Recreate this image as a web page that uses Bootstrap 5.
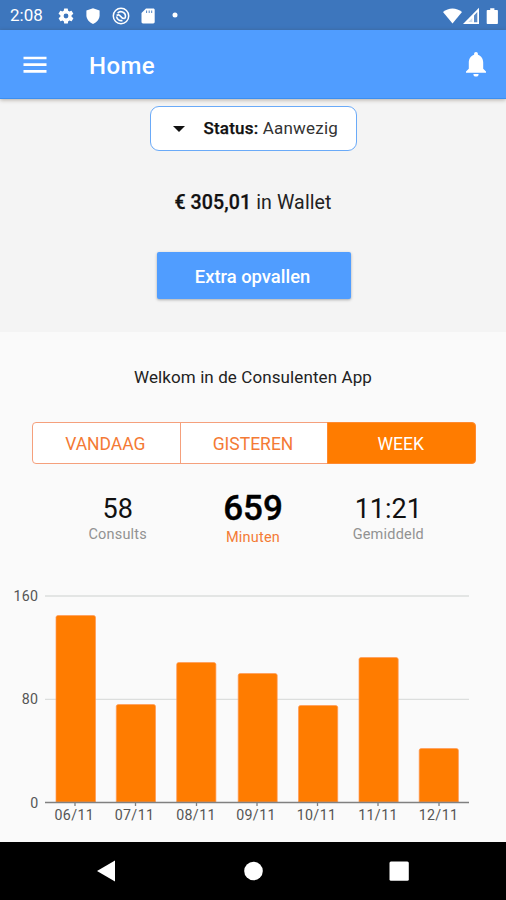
<!DOCTYPE html>
<html lang="nl">
<head>
<meta charset="utf-8">
<meta name="viewport" content="width=device-width, initial-scale=1">
<title>Home</title>
<link href="https://cdn.jsdelivr.net/npm/bootstrap@5.3.0/dist/css/bootstrap.min.css" rel="stylesheet">
<style>
  body { font-family: Roboto, "Liberation Sans", sans-serif; background: #fafafa; color: #222; height: 900px; overflow: hidden; }
  svg { display: block; flex: none; }
  .status-bar { height: 30px; background: #3d76bd; padding: 2px 7px 0 10px; font-size: 17px; }
  .status-icons { margin-left: 14px; gap: 9.4px; }
  .app-bar { height: 69px; background: #509dff; border-bottom: 1px solid #3c8ff0; box-shadow: 0 1px 4px rgba(60,40,20,.35); padding: 0 17px 0 21px; z-index: 1; }
  .app-title { font-size: 24px; font-weight: 500; margin-left: 40px; padding-top: 3px; letter-spacing: .4px; line-height: 1; }
  .hero { height: 233px; background: #f4f4f4; padding-top: 7px; }
  .status-select, .status-select:hover { width: 207px; height: 45px; border: 1px solid #6aaaf8; border-radius: 9px; background: #fff; color: #333; font-size: 17px; padding: 1px 18px 0 22px; letter-spacing: .2px; margin-left: 1px; }
  .status-select b, .wallet b { font-weight: 500; color: #111; -webkit-text-stroke: .25px #111; }
  .wallet { font-size: 19.6px; line-height: 24px; margin-top: 40px; letter-spacing: .1px; }
  .boost, .boost:hover { width: 194px; height: 47px; margin: 37px 0 0 1px; border: 0; border-radius: 2px; background: #509dff; color: #fff; font-size: 18.4px; font-weight: 500; box-shadow: 0 1px 3px rgba(0,0,0,.3); }
  .boost span { padding: 2px 2px 0 0; display: block; }
  .welcome { font-size: 17px; line-height: 20px; padding-top: 35px; letter-spacing: .1px; }
  .periods { margin: 35px 30px 0 32px; height: 42px; }
  .periods .btn { flex: 1 1 0; border: 1px solid #f5a07c; background: #fff; color: #f47a35; font-size: 17.5px; padding: 2px 2px 0 0; border-radius: 4px; }
  .periods .btn.active { background: #ff7c00; border-color: #ff8a30; color: #fff; }
  .stats { margin: 23px 50px 0; height: 61px; }
  .stat-number { font-size: 27px; line-height: 32px; color: #111; margin-top: 6px; }
  .stat-label { font-size: 14.5px; line-height: 18px; color: #929292; letter-spacing: .2px; margin-top: 1px; }
  .stat-main .stat-number { font-size: 35px; line-height: 36px; font-weight: 500; color: #000; margin-top: 4px; -webkit-text-stroke: .4px #000; }
  .stat-main .stat-label { color: #f47a35; margin-top: 2px; }
  .chart text { font-size: 14.2px; fill: #555; letter-spacing: .4px; }
  .nav-keys { height: 58px; background: #000; }
</style>
</head>
<body class="d-flex flex-column">
<div class="status-bar d-flex align-items-center text-white flex-shrink-0">
  <span>2:08</span>
  <div class="status-icons d-flex align-items-center">
    <svg width="18" height="18" viewBox="0 0 24 24" fill="#fff"><path d="M19.4 13a7.500 7.500 0 0 0 0-2l2.100-1.600a.5.5 0 0 0 .1-.6l-2-3.500a.5.5 0 0 0-.6-.2l-2.500 1a7.300 7.300 0 0 0-1.700-1l-.4-2.700a.5.5 0 0 0-.5-.4h-4a.5.5 0 0 0-.5.4L9 5.100a7.700 7.700 0 0 0-1.700 1l-2.500-1a.5.5 0 0 0-.6.2l-2 3.500a.5.5 0 0 0 .1.600L4.500 11a7.900 7.900 0 0 0 0 2l-2.100 1.600a.5.5 0 0 0-.1.600l2 3.500c.1.200.4.300.6.200l2.500-1c.5.400 1.100.7 1.700 1l.4 2.700c0 .2.200.4.500.4h4c.2 0 .5-.2.500-.4l.4-2.700c.6-.3 1.200-.6 1.700-1l2.500 1c.2.100.5 0 .6-.2l2-3.500a.5.500 0 0 0-.1-.6zM12 15.200a3.200 3.200 0 1 1 0-6.400 3.200 3.200 0 0 1 0 6.400z"/></svg>
    <svg width="18" height="18" viewBox="0 0 18 18" fill="#fff"><path d="M9 1.200L2.400 3.500v4.700c0 4 2.800 7.200 6.600 8.700 3.800-1.500 6.600-4.700 6.600-8.700V3.500z"/></svg>
    <svg width="18" height="18" viewBox="0 0 18 18" fill="none" stroke="#fff"><circle cx="9" cy="9" r="7.700" stroke-width="1.500"/><path d="M5.600 6.200A4.500 4.500 0 0 1 13.500 9c0 1-.3 1.800-.8 2.500M4.600 8.500c1.400-.9 2.900-.6 3.900.7 1 1.400 2.200 2.600 4.200 2.300M4.600 9.500A4.500 4.500 0 0 0 10.500 13.400" stroke-width="1.600"/></svg>
    <svg width="18" height="18" viewBox="0 0 18 18"><path d="M7 1.500h7.200c.9 0 1.500.6 1.500 1.400v12.200c0 .8-.6 1.400-1.500 1.400H4c-.9 0-1.500-.6-1.500-1.400V6z" fill="#fff"/><path d="M7.600 3.500v2.500M10.200 3.500v2.500M12.700 3.500v2.500" stroke="#3d76bd" stroke-width=".9"/></svg>
    <svg width="18" height="18" viewBox="0 0 18 18"><circle cx="9" cy="8" r="2.500" fill="#fff"/></svg>
  </div>
  <svg class="ms-auto" width="56" height="18" viewBox="0 0 56 18"><path d="M0 5C5.500.2 13.500.2 19 5L9.500 16.500z" fill="#fff"/><path d="M36 .8V17H20z" fill="#fff"/><path d="M34.300 5v3.500h-3.300zM31 8.500h3.300v6.700h-3.300z" fill="#3d76bd" opacity=".85"/><path d="M29.300 11v4h-4z" fill="#3d76bd" opacity=".25"/><path d="M44.500 3h2.700V1.200h4.200V3h2.700q.8 0 .8.800v12.400q0 .8-.8.800h-9.600q-.8 0-.8-.8V3.800q0-.8.800-.8z" fill="#fff"/></svg>
</div>
<nav class="app-bar d-flex align-items-center text-white flex-shrink-0 position-relative">
  <svg width="28" height="20" viewBox="0 0 28 20"><path d="M2.500 4h23M2.500 10.700h23M2.500 17.400h23" stroke="#fff" stroke-width="2.700"/></svg>
  <h1 class="app-title mb-0">Home</h1>
  <svg class="ms-auto" width="26" height="28" viewBox="0 0 26 28" fill="#fff"><path d="M13 2c1.200 0 1.900.9 1.900 1.900v.8c3.500 1 5.300 4.200 5.300 7.800v6.300l2.800 2.600v1.400H3v-1.400l2.800-2.600v-6.300c0-3.600 1.800-6.800 5.300-7.800v-.8C11.100 2.900 11.800 2 13 2zM10.400 24h5.200a2.600 2.600 0 0 1-5.200 0z"/></svg>
</nav>
<section class="hero d-flex flex-column align-items-center flex-shrink-0">
  <button class="status-select btn d-flex align-items-center justify-content-between">
    <svg width="12" height="6" viewBox="0 0 12 6"><path d="M0 0h12L6 6z" fill="#111"/></svg>
    <span><b>Status:</b> Aanwezig</span>
  </button>
  <div class="wallet"><b>€ 305,01</b> in Wallet</div>
  <button class="boost btn p-0"><span>Extra opvallen</span></button>
</section>
<main class="flex-grow-1">
  <p class="welcome text-center mb-0">Welkom in de Consulenten App</p>
  <div class="periods btn-group d-flex">
    <button class="btn d-flex align-items-center justify-content-center">VANDAAG</button>
    <button class="btn d-flex align-items-center justify-content-center">GISTEREN</button>
    <button class="btn active d-flex align-items-center justify-content-center">WEEK</button>
  </div>
  <div class="stats row g-0 text-center">
    <div class="col"><div class="stat-number">58</div><div class="stat-label">Consults</div></div>
    <div class="col stat-main"><div class="stat-number">659</div><div class="stat-label">Minuten</div></div>
    <div class="col"><div class="stat-number">11:21</div><div class="stat-label">Gemiddeld</div></div>
  </div>
  <svg class="chart" width="506" height="290" viewBox="0 548 506 290">
    <path d="M45 596h424M45 699.300h424" stroke="#dcdedd" stroke-width="1.300"/>
    <g fill="#ff7c00" stroke="#ff9a55" stroke-width=".7">
      <path d="M56 802V617.500q0-2 2-2h35.500q2 0 2 2V802z"/>
      <path d="M116.300 802V706.500q0-2 2-2h35.200q2 0 2 2V802z"/>
      <path d="M176.700 802V664.500q0-2 2-2h35.200q2 0 2 2V802z"/>
      <path d="M238.200 802V675.500q0-2 2-2h35q2 0 2 2V802z"/>
      <path d="M298.500 802V707.500q0-2 2-2h35.200q2 0 2 2V802z"/>
      <path d="M359 802V659.500q0-2 2-2h35.200q2 0 2 2V802z"/>
      <path d="M419.200 802V750.500q0-2 2-2h35.200q2 0 2 2V802z"/>
    </g>
    <path d="M45 802.500h424M75 803v3M135.500 803v3M196.500 803v3M257 803v3M317.500 803v3M378 803v3M439 803v3" stroke="#808080" stroke-width="1.300"/>
    <g text-anchor="end"><text x="38.500" y="601">160</text><text x="38.500" y="704">80</text><text x="38.500" y="807.500">0</text></g>
    <g text-anchor="middle"><text x="74.300" y="819.500">06/11</text><text x="134.500" y="819.500">07/11</text><text x="196" y="819.500">08/11</text><text x="256" y="819.500">09/11</text><text x="316.500" y="819.500">10/11</text><text x="378" y="819.500">11/11</text><text x="438.500" y="819.500">12/11</text></g>
  </svg>
</main>
<footer class="nav-keys flex-shrink-0">
  <svg width="506" height="58" viewBox="0 842 506 58" fill="#fff"><path d="M115 860.500v21L97 871z"/><circle cx="253.500" cy="871" r="9.300"/><rect x="389.500" y="861.500" width="19.300" height="19.300" rx="1.500"/></svg>
</footer>
<script src="https://cdn.jsdelivr.net/npm/bootstrap@5.3.0/dist/js/bootstrap.bundle.min.js"></script>
</body>
</html>
